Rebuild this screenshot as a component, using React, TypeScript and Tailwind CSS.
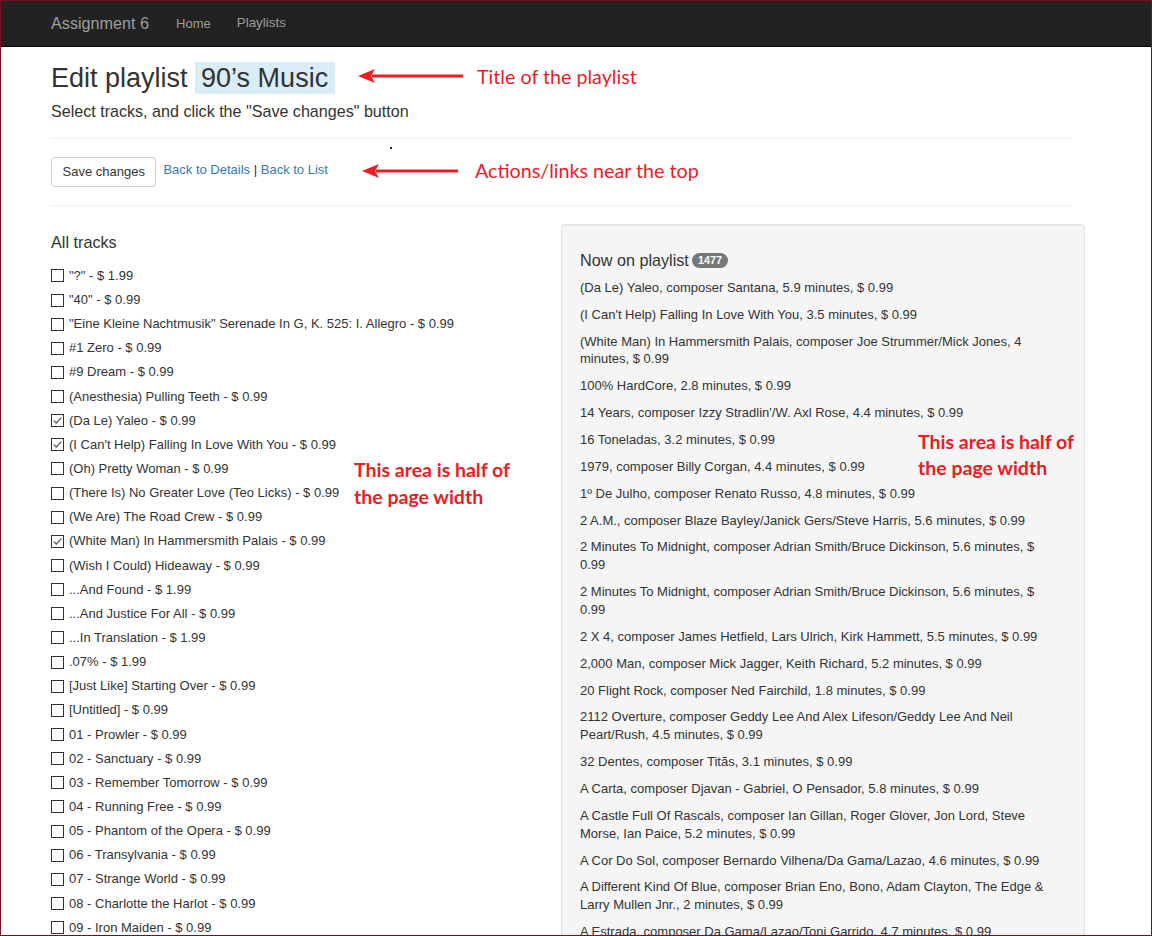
import React from "react";

const tracks: [string, boolean][] = [
  ['"?" - $ 1.99', false],
  ['"40" - $ 0.99', false],
  ['"Eine Kleine Nachtmusik" Serenade In G, K. 525: I. Allegro - $ 0.99', false],
  ["#1 Zero - $ 0.99", false],
  ["#9 Dream - $ 0.99", false],
  ["(Anesthesia) Pulling Teeth - $ 0.99", false],
  ["(Da Le) Yaleo - $ 0.99", true],
  ["(I Can't Help) Falling In Love With You - $ 0.99", true],
  ["(Oh) Pretty Woman - $ 0.99", false],
  ["(There Is) No Greater Love (Teo Licks) - $ 0.99", false],
  ["(We Are) The Road Crew - $ 0.99", false],
  ["(White Man) In Hammersmith Palais - $ 0.99", true],
  ["(Wish I Could) Hideaway - $ 0.99", false],
  ["...And Found - $ 1.99", false],
  ["...And Justice For All - $ 0.99", false],
  ["...In Translation - $ 1.99", false],
  [".07% - $ 1.99", false],
  ["[Just Like] Starting Over - $ 0.99", false],
  ["[Untitled] - $ 0.99", false],
  ["01 - Prowler - $ 0.99", false],
  ["02 - Sanctuary - $ 0.99", false],
  ["03 - Remember Tomorrow - $ 0.99", false],
  ["04 - Running Free - $ 0.99", false],
  ["05 - Phantom of the Opera - $ 0.99", false],
  ["06 - Transylvania - $ 0.99", false],
  ["07 - Strange World - $ 0.99", false],
  ["08 - Charlotte the Harlot - $ 0.99", false],
  ["09 - Iron Maiden - $ 0.99", false],
];

const playlist: string[] = [
  "(Da Le) Yaleo, composer Santana, 5.9 minutes, $ 0.99",
  "(I Can't Help) Falling In Love With You, 3.5 minutes, $ 0.99",
  "(White Man) In Hammersmith Palais, composer Joe Strummer/Mick Jones, 4 minutes, $ 0.99",
  "100% HardCore, 2.8 minutes, $ 0.99",
  "14 Years, composer Izzy Stradlin'/W. Axl Rose, 4.4 minutes, $ 0.99",
  "16 Toneladas, 3.2 minutes, $ 0.99",
  "1979, composer Billy Corgan, 4.4 minutes, $ 0.99",
  "1º De Julho, composer Renato Russo, 4.8 minutes, $ 0.99",
  "2 A.M., composer Blaze Bayley/Janick Gers/Steve Harris, 5.6 minutes, $ 0.99",
  "2 Minutes To Midnight, composer Adrian Smith/Bruce Dickinson, 5.6 minutes, $ 0.99",
  "2 Minutes To Midnight, composer Adrian Smith/Bruce Dickinson, 5.6 minutes, $ 0.99",
  "2 X 4, composer James Hetfield, Lars Ulrich, Kirk Hammett, 5.5 minutes, $ 0.99",
  "2,000 Man, composer Mick Jagger, Keith Richard, 5.2 minutes, $ 0.99",
  "20 Flight Rock, composer Ned Fairchild, 1.8 minutes, $ 0.99",
  "2112 Overture, composer Geddy Lee And Alex Lifeson/Geddy Lee And Neil Peart/Rush, 4.5 minutes, $ 0.99",
  "32 Dentes, composer Titãs, 3.1 minutes, $ 0.99",
  "A Carta, composer Djavan - Gabriel, O Pensador, 5.8 minutes, $ 0.99",
  "A Castle Full Of Rascals, composer Ian Gillan, Roger Glover, Jon Lord, Steve Morse, Ian Paice, 5.2 minutes, $ 0.99",
  "A Cor Do Sol, composer Bernardo Vilhena/Da Gama/Lazao, 4.6 minutes, $ 0.99",
  "A Different Kind Of Blue, composer Brian Eno, Bono, Adam Clayton, The Edge & Larry Mullen Jnr., 2 minutes, $ 0.99",
  "A Estrada, composer Da Gama/Lazao/Toni Garrido, 4.7 minutes, $ 0.99",
  "A Favor Da Paz, composer Marcelo Yuka, 4.1 minutes, $ 0.99",
];

function Check({ checked }: { checked: boolean }) {
  return (
    <span className="flex h-[13px] w-[13px] shrink-0 items-center justify-center border border-[#333] bg-white">
      {checked && (
        <svg width="11" height="11" viewBox="0 0 11 11">
          <polyline points="1.8,5.6 4.3,8.1 9.2,2.6" fill="none" stroke="#555" strokeWidth="1.3" />
        </svg>
      )}
    </span>
  );
}

function Arrow({ left, top, width }: { left: number; top: number; width: number }) {
  return (
    <svg
      className="absolute"
      style={{ left, top }}
      width={width}
      height={16}
      viewBox={`0 0 ${width} 16`}
    >
      <rect x={14} y={6.5} width={width - 14} height={3} fill="#ec1c24" />
      <polygon points={`0,8 17,1 13,8 17,15`} fill="#ec1c24" />
    </svg>
  );
}

export default function App() {
  return (
    <div
      className="relative h-[936px] w-[1152px] overflow-hidden border border-[#7d0c1e] bg-white text-[#333]"
      style={{ fontFamily: '"Liberation Sans", Arial, sans-serif' }}
    >
      {/* navbar */}
      <div className="flex h-[46px] items-center border-b border-[#080808] bg-[#222] pl-[50px] text-[#9d9d9d]">
        <span className="text-[16.2px]">Assignment 6</span>
        <span className="ml-[27px] text-[13px]">Home</span>
        <span className="ml-[26px] text-[13.4px]">Playlists</span>
      </div>

      <div className="pl-[50px]">
        <div className="w-[1020px]">
          <h2 className="mt-[15px] text-[27px] leading-[32px]">
            Edit playlist{" "}
            <span className="bg-[#d9edf7] py-[1px] pl-[6px] pr-[7px]">90’s Music</span>
          </h2>
          <p className="mt-[6px] text-[16.1px] leading-[22px]">
            Select tracks, and click the "Save changes" button
          </p>
          <div className="mt-[16px] border-t border-[#eee]" />
          <div className="mt-[18px] flex items-start text-[13px]">
            <button className="h-[30px] rounded-[3.6px] border border-[#ccc] bg-white px-[10.5px] leading-[18px] text-[#333]">
              Save changes
            </button>
            <span className="ml-[7px] mt-[4px] leading-[18px]">
              <a className="text-[#337ab7]">Back to Details</a> |{" "}
              <a className="text-[#337ab7]">Back to List</a>
            </span>
          </div>
          <div className="mt-[18px] border-t border-[#eee]" />
        </div>

        <div className="mt-[18px] flex items-start">
          <div className="w-[510px] text-[13px]">
            <h4 className="mt-[10px] text-[16.2px] leading-[17.8px]">All tracks</h4>
            <div className="mt-[12px]">
              {tracks.map(([t, c], i) => (
                <div key={i} className="flex h-[24.15px] items-center leading-[18px]">
                  <Check checked={c} />
                  <span className="ml-[5px] whitespace-nowrap">{t}</span>
                </div>
              ))}
            </div>
          </div>
          <div className="w-[524px] rounded-[3.6px] border border-[#e3e3e3] bg-[#f5f5f5] pb-[17px] pl-[18px] pr-[32px] pt-[18px] shadow-[inset_0_1px_1px_rgba(0,0,0,0.05)]">
            <h4 className="mt-[9px] flex items-center text-[16.2px] leading-[17.8px]">
              Now on playlist
              <span className="ml-[3px] rounded-[9px] bg-[#777] px-[6px] text-[10.8px] font-bold leading-[15px] text-white">
                1477
              </span>
            </h4>
            <div className="mt-[9px] text-[13px] leading-[17.86px]">
              {playlist.map((p, i) => (
                <p key={i} className="mb-[9px]">
                  {p}
                </p>
              ))}
            </div>
          </div>
        </div>
      </div>

      {/* stray dot */}
      <span className="absolute left-[389px] top-[146px] h-[1.5px] w-[1.5px] bg-[#222]" />

      {/* annotations */}
      <Arrow left={357} top={67} width={105} />
      <Arrow left={361} top={162} width={96} />
      <div
        className="absolute left-[476px] top-[64px] text-[19.7px] leading-[24px] text-[#ec1c24]"
        style={{ fontFamily: "Lato, sans-serif" }}
      >
        Title of the playlist
      </div>
      <div
        className="absolute left-[474px] top-[158px] text-[19.7px] leading-[24px] text-[#ec1c24]"
        style={{ fontFamily: "Lato, sans-serif" }}
      >
        Actions/links near the top
      </div>
      <div
        className="absolute left-[353px] top-[455px] text-[19.5px] font-bold leading-[27px] text-[#ec1c24]"
        style={{ fontFamily: "Lato, sans-serif" }}
      >
        This area is half of
        <br />
        the page width
      </div>
      <div
        className="absolute left-[917px] top-[428px] text-[19.5px] font-bold leading-[26px] text-[#ec1c24]"
        style={{ fontFamily: "Lato, sans-serif" }}
      >
        This area is half of
        <br />
        the page width
      </div>
    </div>
  );
}
